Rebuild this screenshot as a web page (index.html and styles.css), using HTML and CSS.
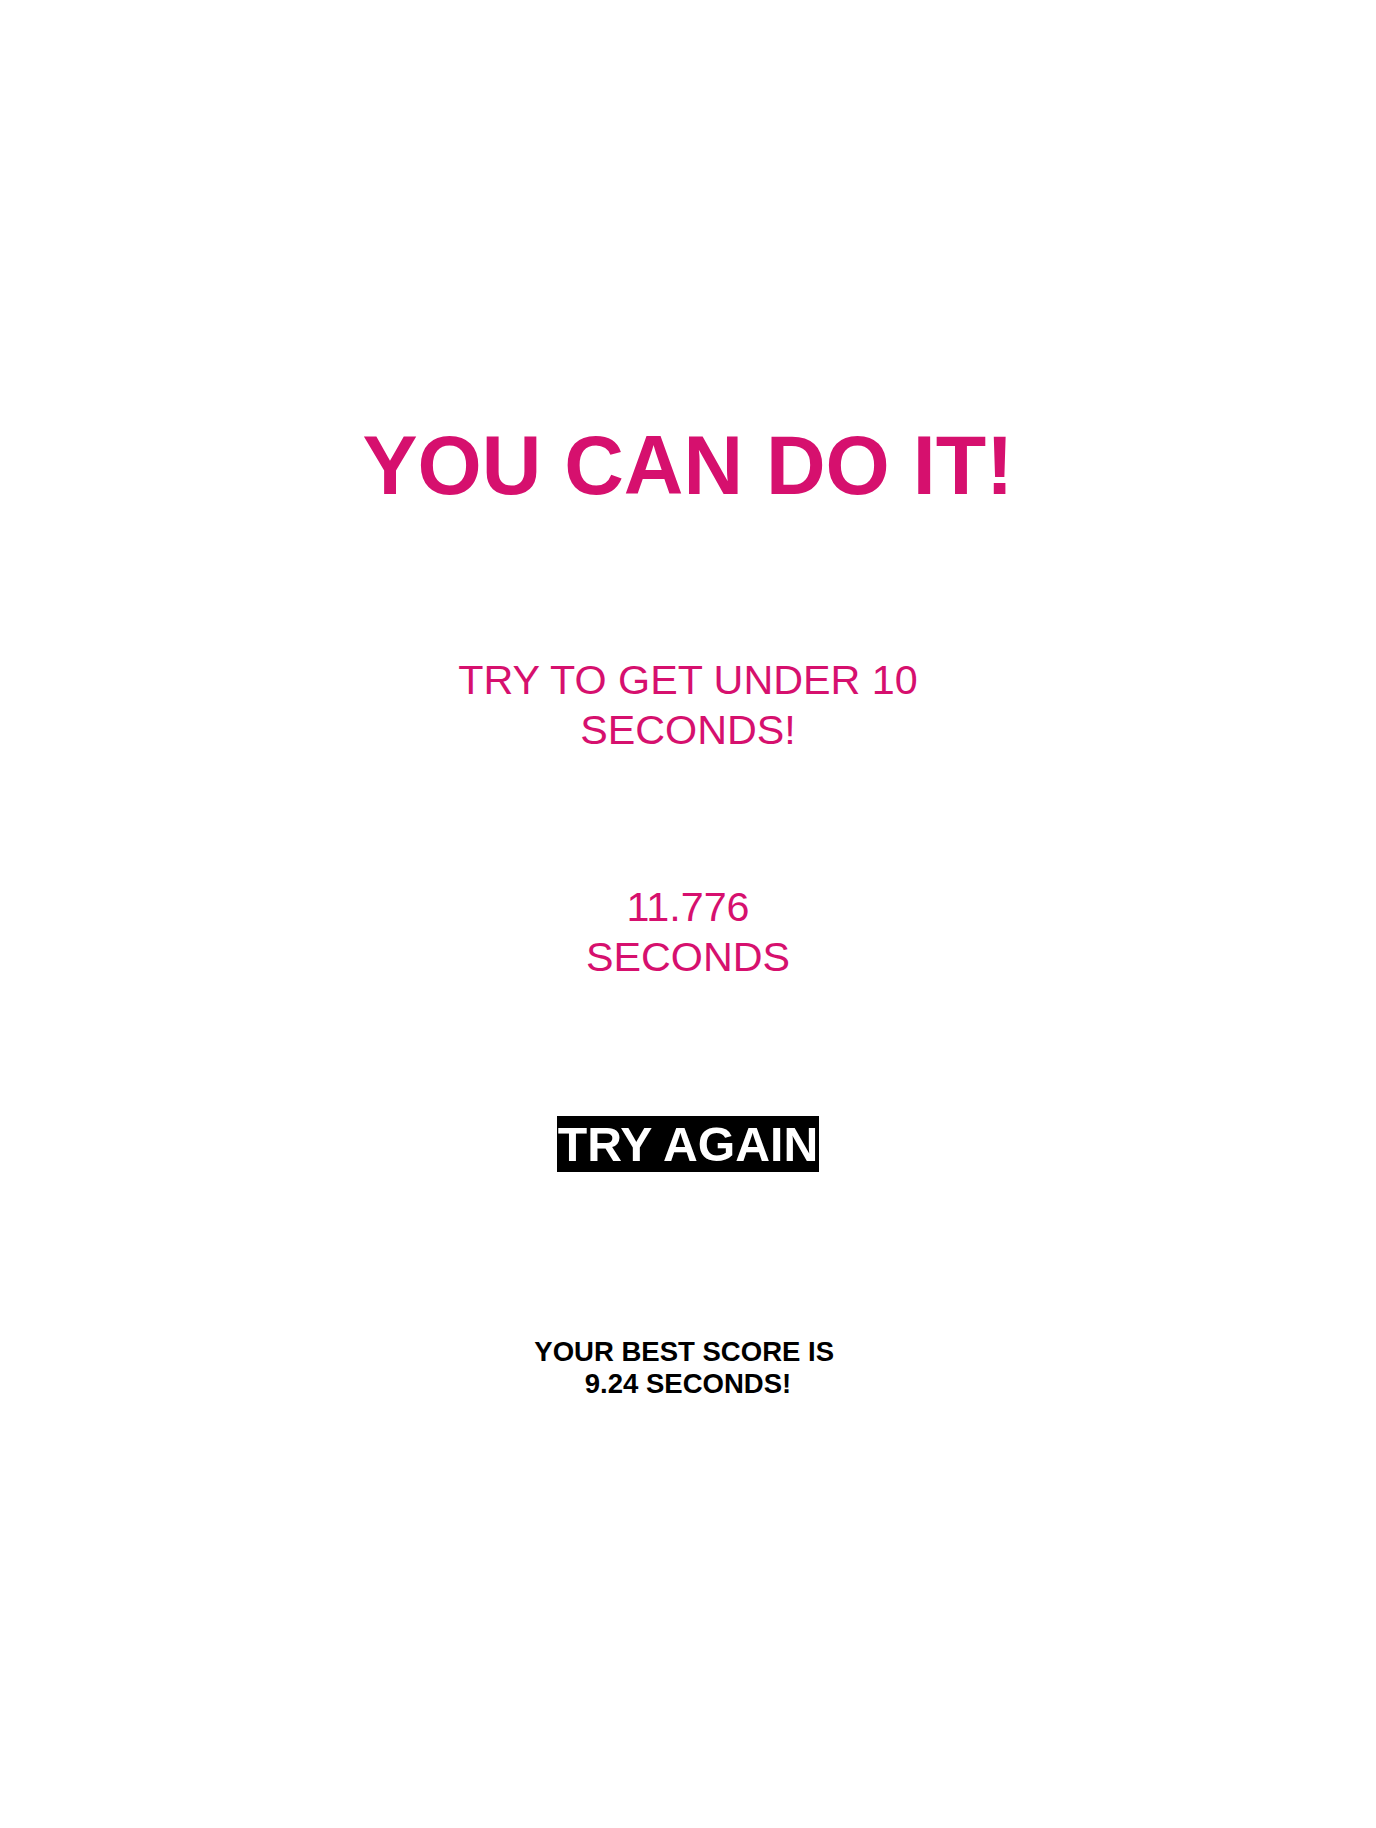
FILE: index.html
```html
<!DOCTYPE html>
<html lang="en">
<head>
<meta charset="utf-8">
<title>You can do it!</title>
<link rel="stylesheet" href="styles.css">
</head>
<body>
<main class="screen">
  <h1 class="headline">YOU CAN DO IT!</h1>
  <p class="hint">TRY TO GET UNDER 10 SECONDS!</p>
  <p class="time">11.776<br>SECONDS</p>
  <button class="again" type="button">TRY AGAIN</button>
  <p class="best">YOUR BEST SCORE IS&nbsp;<br>9.24 SECONDS!</p>
</main>
</body>
</html>
```

FILE: styles.css
```css
html, body {
  margin: 0;
  padding: 0;
  background: #ffffff;
}

.screen {
  display: flex;
  flex-direction: column;
  align-items: center;
  text-align: center;
  font-family: "Liberation Sans", Arial, sans-serif;
  padding-top: 418px;
  min-height: 1828px;
  box-sizing: border-box;
}

.headline {
  margin: 0;
  font-size: 6vw;
  font-weight: 700;
  line-height: normal;
  color: #d6106e;
}

.hint {
  margin: 143px 0 0;
  width: 500px;
  font-size: 3vw;
  font-weight: 400;
  line-height: 1.2;
  color: #d6106e;
}

.time {
  margin: 128px 0 0;
  font-size: 3vw;
  line-height: 1.2;
  color: #d6106e;
}

.again {
  margin: 134px 0 0;
  padding: 0 1px;
  border: none;
  border-radius: 0;
  background: #000000;
  color: #ffffff;
  font-family: "Liberation Sans", Arial, sans-serif;
  font-size: 3.5vw;
  font-weight: 700;
  line-height: normal;
  cursor: pointer;
}

.best {
  margin: 164px 0 0;
  font-size: 2vw;
  font-weight: 700;
  line-height: normal;
  color: #000000;
}
```
